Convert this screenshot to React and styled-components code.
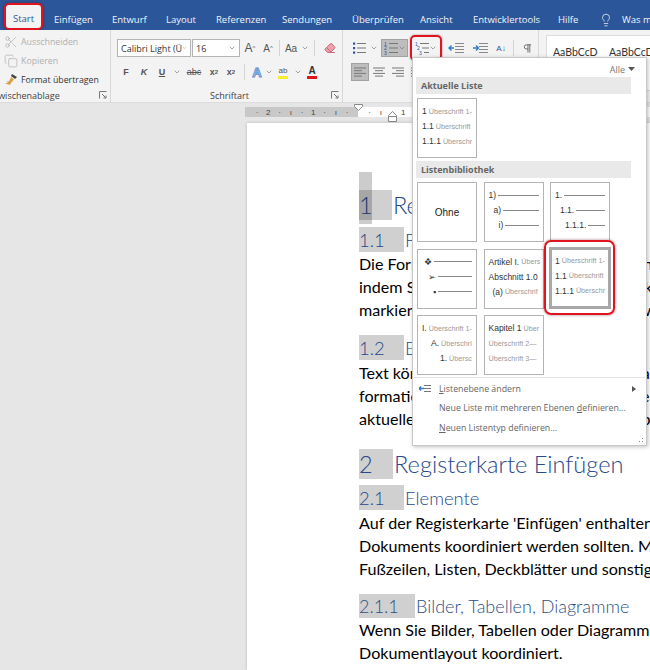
import React from 'react';
import styled, { createGlobalStyle } from 'styled-components';
import { Scissors, Copy, Lightbulb, ChevronDown, Eraser, Pilcrow } from 'lucide-react';

const GlobalStyle = createGlobalStyle`
  html, body { margin: 0; padding: 0; background: #e6e6e6; }
  * { box-sizing: border-box; }
  #root { width: 650px; height: 670px; overflow: hidden; }
`;

const TABS = [
  { label: 'Einfügen', w: 58 },
  { label: 'Entwurf', w: 54 },
  { label: 'Layout', w: 50 },
  { label: 'Referenzen', w: 66 },
  { label: 'Sendungen', w: 70 },
  { label: 'Überprüfen', w: 68 },
  { label: 'Ansicht', w: 53 },
  { label: 'Entwicklertools', w: 85 },
  { label: 'Hilfe', w: 38 },
];

const RULER_TICKS = ['·', '2', '·', 'ı', '·', '1', '·', 'ı', '·', '', '·', 'ı', '·', '1', '·', 'ı'];

const Screen = styled.div`
  position: relative;
  width: 650px;
  height: 670px;
  overflow: hidden;
  font-family: "Open Sans", "Liberation Sans", sans-serif;
  color: #444;
`;

const TitleBar = styled.div`
  display: flex;
  align-items: flex-end;
  height: 30px;
  padding: 0 0 0 4px;
  background: #2b579a;
  overflow: hidden;
  white-space: nowrap;
`;

const Tab = styled.div`
  flex: none;
  width: ${p => p.$w}px;
  padding-left: 9px;
  font-size: 9.5px;
  line-height: 21px;
  color: #f0f4fa;
`;

const StartTab = styled.div`
  flex: none;
  width: 39px;
  height: 27px;
  margin-right: 2px;
  text-align: center;
  font-size: 9.5px;
  line-height: 27px;
  color: #2b579a;
  background: #f3f3f3;
  border: 2px solid #e0141e;
  border-radius: 5px;
  box-shadow: 0 0 3px rgba(80, 0, 0, .5);
`;

const TellMe = styled.div`
  display: flex;
  align-items: center;
  gap: 9px;
  margin-left: 12px;
  font-size: 9.5px;
  line-height: 21px;
  color: #f0f4fa;
`;

const Ribbon = styled.div`
  display: flex;
  height: 73px;
  background: #f3f3f3;
  border-bottom: 1px solid #dcdcdc;
`;

const Group = styled.div`
  position: relative;
  display: flex;
  flex: none;
  flex-direction: column;
  width: ${p => p.$w}px;
  padding-left: ${p => p.$pad || 0}px;
  padding-top: 9px;
  border-right: 1px solid #d8d8d8;
`;

const GroupBody = styled.div`
  flex: 1;
  display: flex;
  flex-direction: column;
  margin-top: ${p => p.$top || 0}px;
  gap: ${p => p.$gap || 6}px;
`;

const GroupLabel = styled.div`
  height: 12px;
  margin-left: ${p => p.$shift || 0}px;
  font-size: 9px;
  line-height: 12px;
  color: #444;
  text-align: ${p => (p.$left ? 'left' : 'center')};
  white-space: nowrap;
`;

const Launcher = styled.svg`
  position: absolute;
  right: 3px;
  bottom: 3px;
  width: 8px;
  height: 8px;
`;

const ClipItem = styled.div`
  display: flex;
  align-items: center;
  gap: 3px;
  height: 13px;
  padding-left: 4px;
  font-size: 8.8px;
  white-space: nowrap;
  color: ${p => (p.$off ? '#b0b0b0' : '#333')};
`;

const Row = styled.div`
  display: flex;
  align-items: center;
  height: 18px;
`;

const Combo = styled.div`
  display: flex;
  align-items: center;
  justify-content: space-between;
  flex: none;
  width: ${p => p.$w}px;
  height: 18px;
  margin-right: 1px;
  padding: 0 3px;
  background: #fff;
  border: 1px solid #b4b4b4;
  font-size: 9px;
  color: #333;
  white-space: nowrap;
  overflow: hidden;
`;

const Cell = styled.div`
  display: flex;
  align-items: center;
  justify-content: center;
  flex: none;
  width: ${p => p.$w}px;
  height: 18px;
  font-family: "Liberation Sans", sans-serif;
  font-size: ${p => p.$size || 10}px;
  font-weight: ${p => (p.$bold ? 700 : 400)};
  font-style: ${p => (p.$italic ? 'italic' : 'normal')};
  text-decoration: ${p => (p.$under ? 'underline' : 'none')};
  color: ${p => p.$color || '#555'};
  background: ${p => (p.$active ? '#bdbdbd' : 'transparent')};
  border: ${p => (p.$active ? '1px solid #a2a2a2' : 'none')};
  sup, sub { font-size: 6px; }
`;

const Divider = styled.div`
  flex: none;
  width: 1px;
  height: 16px;
  margin: 0 ${p => p.$m || 4}px;
  background: #d4d4d4;
`;

const Multilevel = styled(Cell)`
  position: relative;
  margin-left: 3px;
  margin-right: 3px;
  &::after {
    content: '';
    position: absolute;
    inset: -4px -1px -4px -1px;
    border: 2px solid #e0141e;
    border-radius: 5px;
    box-shadow: 0 0 2px rgba(80, 0, 0, .5);
  }
`;

const ColourBar = styled.span`
  line-height: 10px;
  padding: 0 1px;
  border-bottom: 3px solid ${p => p.$color};
`;

const OutlineA = styled.span`
  color: #dbe7f6;
  -webkit-text-stroke: 1px #5c94d6;
`;

const StylesBox = styled.div`
  flex: none;
  display: flex;
  gap: 11px;
  width: 110px;
  height: 56px;
  margin: 5px 0 0 7px;
  padding: 10px 6px;
  background: #fff;
  border: 1px solid #dcdcdc;
  font-family: "Lato", sans-serif;
  font-size: 10.5px;
  color: #333;
  white-space: nowrap;
  overflow: hidden;
`;

const StyleSample = styled.span`
  flex: none;
  width: 45px;
  overflow: hidden;
`;

const RulerRow = styled.div`
  display: block;
  height: 20px;
  padding: 4px 0 0 245px;
  background: #e6e6e6;
`;

const RulerStrip = styled.div`
  position: relative;
  display: flex;
  align-items: center;
  height: 10px;
  padding-left: 6.4px;
  background: linear-gradient(to right, #c8c8c8 113px, #fdfdfd 113px);
  font-family: "Liberation Sans", sans-serif;
  font-size: 8px;
  color: #444;
  white-space: nowrap;
`;

const RulerTick = styled.span`
  flex: none;
  width: 11.25px;
  text-align: center;
`;

const IndentMark = styled.svg`
  position: absolute;
  left: ${p => p.$x}px;
  top: ${p => p.$y}px;
  width: 9px;
  height: ${p => p.$h}px;
`;

const DocArea = styled.div`
  display: flex;
  height: 547px;
  padding-left: 247px;
  background: #e6e6e6;
`;

const Page = styled.div`
  flex: 1;
  position: relative;
  padding: 67px 0 0 112px;
  background: #fff;
  box-shadow: 0 0 3px rgba(0, 0, 0, .2);
  font-family: "Lato", "Liberation Sans", sans-serif;
  white-space: nowrap;
  overflow: hidden;
`;

const Heading = styled.div`
  display: flex;
  align-items: center;
  height: ${p => p.$h}px;
  margin-top: ${p => p.$top || 0}px;
  font-size: ${p => p.$size}px;
  font-weight: 300;
  color: ${p => p.$color || '#27488a'};
`;

const HeadingNumber = styled.span`
  flex: none;
  display: flex;
  align-items: center;
  width: ${p => p.$w}px;
  height: 100%;
  background: #d0d0d0;
`;

const HeadingText = styled.span`
  margin-left: 1px;
`;

const SelectedBar = styled.div`
  position: absolute;
  left: 112px;
  top: 49px;
  width: 13px;
  height: 52px;
  background: rgba(0, 0, 0, .2);
`;

const BodyBlock = styled.div`
  margin-top: ${p => p.$top || 0}px;
`;

const BodyLine = styled.div`
  height: 23px;
  font-size: 16.1px;
  line-height: 23px;
  color: #000;
`;

const Gallery = styled.div`
  position: absolute;
  left: 412px;
  top: 57px;
  width: 235px;
  height: 389px;
  padding: 3px 15px 0 3px;
  background: #fff;
  border: 1px solid #c8c8c8;
  box-shadow: 1px 1px 4px rgba(0, 0, 0, .25);
  font-family: "Liberation Sans", sans-serif;
`;

const FilterRow = styled.div`
  display: flex;
  justify-content: flex-end;
  align-items: center;
  gap: 3px;
  height: 16px;
  margin-right: -4px;
  font-family: "Open Sans", sans-serif;
  font-size: 9px;
  color: #777;
`;

const SectionTitle = styled.div`
  height: 17px;
  margin-top: ${p => p.$top || 0}px;
  padding-left: 5px;
  background: #e9e9e9;
  font-family: "Open Sans", sans-serif;
  font-size: 9px;
  font-weight: 700;
  line-height: 17px;
  color: #666;
`;

const ThumbGrid = styled.div`
  display: grid;
  grid-template-columns: repeat(3, 60px);
  grid-auto-rows: 60px;
  gap: 6.5px;
  margin: 4px 0 0 1px;
`;

const Thumb = styled.div`
  flex: 1;
  display: flex;
  flex-direction: column;
  justify-content: center;
  gap: 6.5px;
  margin: ${p => (p.$selected ? '-2px -1px 0' : '0')};
  padding: 0 ${p => (p.$selected ? 3 : 4)}px 4px;
  overflow: hidden;
  white-space: nowrap;
  border: ${p => (p.$selected ? '3px solid #a8a8a8' : '1px solid #b4b4b4')};
`;

const SelectedRing = styled.div`
  position: absolute;
  inset: -9px -5px -6px -6px;
  border: 2.5px solid #e0141e;
  border-radius: 7px;
  box-shadow: 0 0 3px rgba(80, 0, 0, .5);
  pointer-events: none;
`;

const ThumbSlot = styled.div`
  position: relative;
  display: flex;
`;

const Level = styled.div`
  display: flex;
  align-items: center;
  gap: 2px;
  height: 8.5px;
  padding-left: ${p => p.$indent || 0}px;
`;

const Num = styled.span`
  flex: none;
  font-size: 8.5px;
  color: #333;
`;

const Caption = styled.span`
  color: #999;
  font-size: 7.2px;
`;

const Rule = styled.span`
  flex: 1;
  height: 1px;
  background: #888;
`;

const NoneLabel = styled.div`
  margin-top: 4px;
  text-align: center;
  font-size: 10px;
  color: #222;
`;

const GalleryMenu = styled.div`
  display: flex;
  flex-direction: column;
  margin: 2px -14px 0 -2px;
  padding-top: 1px;
  border-top: 1px solid #e4e4e4;
`;

const MenuItem = styled.div`
  position: relative;
  display: flex;
  align-items: center;
  height: 19.5px;
  padding-left: 25px;
  font-family: "Open Sans", sans-serif;
  font-size: 8.8px;
  color: #666;
  u { text-decoration: underline; }
`;

const MenuIcon = styled.svg`
  position: absolute;
  left: 5px;
  top: 5px;
  width: 12px;
  height: 9px;
`;

const MenuArrow = styled.span`
  position: absolute;
  right: 9px;
  top: 7px;
  width: 0;
  height: 0;
  border-left: 4px solid #555;
  border-top: 3px solid transparent;
  border-bottom: 3px solid transparent;
`;

const Grip = styled.svg`
  position: absolute;
  right: 2px;
  bottom: 2px;
  width: 6px;
  height: 6px;
`;

const LineIcon = ({ bullets, color = '#777' }) => (
  <svg width="14" height="14" viewBox="0 0 14 14">
    {[2.5, 7, 11.5].map((y, i) => (
      <g key={y}>
        {bullets === 'dots' && <rect x="1" y={y - 1} width="2.2" height="2.2" fill="#2b579a" />}
        {bullets === 'nums' && <text x="0" y={y + 2} fontSize="5" fill="#2b579a">{i + 1}</text>}
        {bullets === 'multi' && <text x={i * 2} y={y + 2} fontSize="5" fill="#2b579a">{i + 1}</text>}
        <line x1={bullets === 'multi' ? 5 + i * 2 : 5} x2="14" y1={y} y2={y} stroke={color} />
      </g>
    ))}
  </svg>
);

const AlignIcon = ({ mode }) => {
  const rows = {
    left: [[1, 13], [1, 9], [1, 13], [1, 9]],
    center: [[1, 13], [3, 11], [1, 13], [3, 11]],
    right: [[1, 13], [5, 13], [1, 13], [5, 13]],
  }[mode];
  return (
    <svg width="14" height="12" viewBox="0 0 14 12">
      {rows.map(([a, b], i) => (
        <line key={i} x1={a} x2={b} y1={2 + i * 2.7} y2={2 + i * 2.7} stroke="#777" />
      ))}
    </svg>
  );
};

const IndentIcon = ({ flip }) => (
  <svg width="16" height="12" viewBox="0 0 16 12">
    {[1.5, 4.5, 7.5, 10.5].map(y => (
      <line key={y} x1="7" x2="16" y1={y} y2={y} stroke="#888" />
    ))}
    <path d={flip ? 'M1 6h5M4 3.5 6.5 6 4 8.5' : 'M6 6H1M3.5 3.5 1 6l2.5 2.5'} stroke="#2b7cd3" fill="none" strokeWidth="1.4" />
  </svg>
);

const FormatPainter = () => (
  <svg width="14" height="13" viewBox="0 0 14 13">
    <path d="M8 1l5 3-2 2-4-3z" fill="#444" />
    <path d="M7 4l3 2.5-3 3.5-1 2L1 10.500l3-1-1-1.500 2 .5z" fill="#d6a24e" />
  </svg>
);

const Chevron = () => <ChevronDown size={8} color="#777" strokeWidth={2} />;

const LauncherIcon = () => (
  <Launcher viewBox="0 0 8 8">
    <path d="M.5 7.5v-7h7M3 3l4 4M7 4.500V7H4.500" stroke="#777" fill="none" />
  </Launcher>
);

const THUMBS = [
  { key: 'none', none: true },
  { key: 'paren', levels: [[0, '1)'], [5, 'a)'], [10, 'i)']], rule: true },
  { key: 'dec', levels: [[0, '1.'], [5, '1.1.'], [10, '1.1.1.']], rule: true },
  { key: 'sym', levels: [[2, '❖'], [6, '➢'], [11, '▪']], rule: true },
  { key: 'art', levels: [[0, 'Artikel I.', 'Übers'], [0, 'Abschnitt 1.0', ''], [4, '(a)', 'Überschrif']] },
  { key: 'sel', selected: true, levels: [[0, '1', 'Überschrift 1-'], [0, '1.1', 'Überschrift'], [0, '1.1.1', 'Überschr']] },
  { key: 'roman', levels: [[0, 'I.', 'Überschrift 1-'], [9, 'A.', 'Überschri'], [18, '1.', 'Übersc']] },
  { key: 'kap', levels: [[0, 'Kapitel 1', 'Über'], [0, '', 'Überschrift 2—'], [0, '', 'Überschrift 3—']] },
];

const ThumbBody = ({ levels, rule }) => levels.map(([indent, num, text]) => (
  <Level key={num + text} $indent={indent}>
    {num && <Num>{num}</Num>}
    {rule ? <Rule /> : <Caption>{text}</Caption>}
  </Level>
));

const BODY_1 = [
  'Die Formatierung von markiertem Text im Dokumenttext lässt sich einfach ändern,',
  'indem Sie im Menüband auf der Registerkarte \'Start\' ein Layout für den Text',
  'markierten Text auswählen und dann zuweisen.',
];
const BODY_2 = [
  'Text können Sie auch direkt mithilfe der anderen Steuerelemente',
  'formatieren. Die meisten Steuerelemente bieten die Möglichkeit, das Design',
  'aktuellen Vorlage oder ein direkt angegebenes Format zu verwenden.',
];
const BODY_3 = [
  'Auf der Registerkarte \'Einfügen\' enthalten die Kataloge Elemente, die mit',
  'Dokuments koordiniert werden sollten. Mit diesen Katalogen können Sie',
  'Fußzeilen, Listen, Deckblätter und sonstige Dokumentbausteine einfügen.',
];
const BODY_4 = [
  'Wenn Sie Bilder, Tabellen oder Diagramme erstellen, werden diese auch mit',
  'Dokumentlayout koordiniert.',
];

const Body = ({ lines, top }) => (
  <BodyBlock $top={top}>
    {lines.map(l => <BodyLine key={l}>{l}</BodyLine>)}
  </BodyBlock>
);

const App = () => (
  <Screen>
    <GlobalStyle />
    <TitleBar>
      <StartTab>Start</StartTab>
      {TABS.map(t => <Tab key={t.label} $w={t.w}>{t.label}</Tab>)}
      <TellMe><Lightbulb size={14} strokeWidth={1.3} />Was möchten Sie tun?</TellMe>
    </TitleBar>

    <Ribbon>
      <Group $w={111}>
        <GroupBody $gap={6} $top={-4}>
          <ClipItem $off><Scissors size={14} strokeWidth={1.3} />Ausschneiden</ClipItem>
          <ClipItem $off><Copy size={14} strokeWidth={1.2} />Kopieren</ClipItem>
          <ClipItem><FormatPainter />Format übertragen</ClipItem>
        </GroupBody>
        <GroupLabel $left $shift={-7}>Zwischenablage</GroupLabel>
        <LauncherIcon />
      </Group>

      <Group $w={232} $pad={6}>
        <GroupBody>
          <Row>
            <Combo $w={74}>Calibri Light (Ü<Chevron /></Combo>
            <Combo $w={48}>16<Chevron /></Combo>
            <Cell $w={18} $size={12}>A<sup>^</sup></Cell>
            <Cell $w={18} $size={10}>A<sup>^</sup></Cell>
            <Divider $m={2} />
            <Cell $w={18} $size={10}>Aa</Cell>
            <Cell $w={10}><Chevron /></Cell>
            <Divider $m={4} />
            <Cell $w={22}><Eraser size={12} color="#c96a78" fill="#eda3ad" /></Cell>
          </Row>
          <Row>
            <Cell $w={18} $bold $size={9}>F</Cell>
            <Cell $w={18} $bold $italic $size={9}>K</Cell>
            <Cell $w={18} $bold $under $size={9}>U</Cell>
            <Cell $w={12}><Chevron /></Cell>
            <Cell $w={22} $size={9}><s>abc</s></Cell>
            <Cell $w={18} $bold $size={9}>x<sub>2</sub></Cell>
            <Cell $w={16} $bold $size={9}>x<sup>2</sup></Cell>
            <Divider $m={5} />
            <Cell $w={14} $bold $size={13}><OutlineA>A</OutlineA></Cell>
            <Cell $w={10}><Chevron /></Cell>
            <Cell $w={18} $size={8}><ColourBar $color="#f6ee2a">ab</ColourBar></Cell>
            <Cell $w={12}><Chevron /></Cell>
            <Cell $w={16} $bold $size={10} $color="#333"><ColourBar $color="#e0141e">A</ColourBar></Cell>
          </Row>
        </GroupBody>
        <GroupLabel>Schriftart</GroupLabel>
        <LauncherIcon />
      </Group>

      <Group $w={196} $pad={8}>
        <GroupBody>
          <Row>
            <Cell $w={16}><LineIcon bullets="dots" /></Cell>
            <Cell $w={14}><Chevron /></Cell>
            <Cell $w={27} $active><LineIcon bullets="nums" /><Chevron /></Cell>
            <Multilevel $w={30}><LineIcon bullets="multi" /><Chevron /></Multilevel>
            <Cell $w={24}><IndentIcon /></Cell>
            <Cell $w={24}><IndentIcon flip /></Cell>
            <Cell $w={18} $size={8} $color="#2b579a">A↓</Cell>
            <Divider $m={3} />
            <Cell $w={20}><Pilcrow size={11} color="#666" /></Cell>
          </Row>
          <Row>
            <Cell $w={18} $active><AlignIcon mode="left" /></Cell>
            <Cell $w={19}><AlignIcon mode="center" /></Cell>
            <Cell $w={19}><AlignIcon mode="right" /></Cell>
            <Cell $w={20}><AlignIcon mode="left" /></Cell>
          </Row>
        </GroupBody>
        <GroupLabel>Absatz</GroupLabel>
        <LauncherIcon />
      </Group>

      <StylesBox>
        <StyleSample>AaBbCcDc</StyleSample>
        <StyleSample>AaBbCcDc</StyleSample>
      </StylesBox>
    </Ribbon>

    <RulerRow>
      <RulerStrip>
        {RULER_TICKS.map((t, i) => <RulerTick key={i}>{t}</RulerTick>)}
        <IndentMark $x={109} $y={-3} $h={7} viewBox="0 0 9 7">
          <path d="M.5.5h8v2L4.5 6.500 .5 2.500z" fill="#fff" stroke="#888" />
        </IndentMark>
        <IndentMark $x={143} $y={4} $h={11} viewBox="0 0 9 11">
          <path d="M.5 10.500v-6L4.500.5l4 4v6zM.5 5.500h8" fill="#fff" stroke="#888" />
        </IndentMark>
      </RulerStrip>
    </RulerRow>

    <DocArea>
      <Page>
        <SelectedBar />
        <Heading $h={30} $size={23.6}>
          <HeadingNumber $w={33}>1</HeadingNumber>
          <HeadingText>Registerkarte Start</HeadingText>
        </Heading>
        <Heading $h={25} $top={7} $size={18.4}>
          <HeadingNumber $w={45}>1.1</HeadingNumber>
          <HeadingText>Formatvorlagen</HeadingText>
        </Heading>
        <Body lines={BODY_1} />
        <Heading $h={25} $top={14} $size={18.4}>
          <HeadingNumber $w={45}>1.2</HeadingNumber>
          <HeadingText>Einfache Formatierung</HeadingText>
        </Heading>
        <Body lines={BODY_2} top={1} />
        <Heading $h={30} $top={19} $size={23.6}>
          <HeadingNumber $w={34}>2</HeadingNumber>
          <HeadingText>Registerkarte Einfügen</HeadingText>
        </Heading>
        <Heading $h={25} $top={6} $size={18.4}>
          <HeadingNumber $w={45}>2.1</HeadingNumber>
          <HeadingText>Elemente</HeadingText>
        </Heading>
        <Body lines={BODY_3} top={1} />
        <Heading $h={24} $top={14} $size={18} $color="#2f4f85">
          <HeadingNumber $w={56}>2.1.1</HeadingNumber>
          <HeadingText>Bilder, Tabellen, Diagramme</HeadingText>
        </Heading>
        <Body lines={BODY_4} />
      </Page>
    </DocArea>

    <Gallery>
      <FilterRow>
        Alle
        <svg width="7" height="4" viewBox="0 0 7 4"><path d="M0 0h7L3.500 4z" fill="#555" /></svg>
      </FilterRow>
      <SectionTitle>Aktuelle Liste</SectionTitle>
      <ThumbGrid>
        <ThumbSlot>
          <Thumb>
            <ThumbBody levels={[[0, '1', 'Überschrift 1-'], [0, '1.1', 'Überschrift'], [0, '1.1.1', 'Überschr']]} />
          </Thumb>
        </ThumbSlot>
      </ThumbGrid>
      <SectionTitle $top={3}>Listenbibliothek</SectionTitle>
      <ThumbGrid>
        {THUMBS.map(t => (
          <ThumbSlot key={t.key}>
            <Thumb $selected={t.selected}>
              {t.none ? <NoneLabel>Ohne</NoneLabel> : <ThumbBody levels={t.levels} rule={t.rule} />}
            </Thumb>
            {t.selected && <SelectedRing />}
          </ThumbSlot>
        ))}
      </ThumbGrid>
      <GalleryMenu>
        <MenuItem>
          <MenuIcon viewBox="0 0 12 9">
            <path d="M5 1.500h7M5 4.500h7M5 7.500h7" stroke="#777" />
            <path d="M0 4.500h5M2 2.500 0 4.500l2 2" stroke="#2b7cd3" fill="none" strokeWidth="1.300" />
          </MenuIcon>
          <span><u>L</u>istenebene ändern</span>
          <MenuArrow />
        </MenuItem>
        <MenuItem><span>Neue Liste mit mehreren Ebenen <u>d</u>efinieren...</span></MenuItem>
        <MenuItem><span><u>N</u>euen Listentyp definieren...</span></MenuItem>
      </GalleryMenu>
      <Grip viewBox="0 0 6 6">
        <path d="M4 1h1v1H4zM1 4h1v1H1zM4 4h1v1H4z" fill="#888" />
      </Grip>
    </Gallery>
  </Screen>
);

export default App;
